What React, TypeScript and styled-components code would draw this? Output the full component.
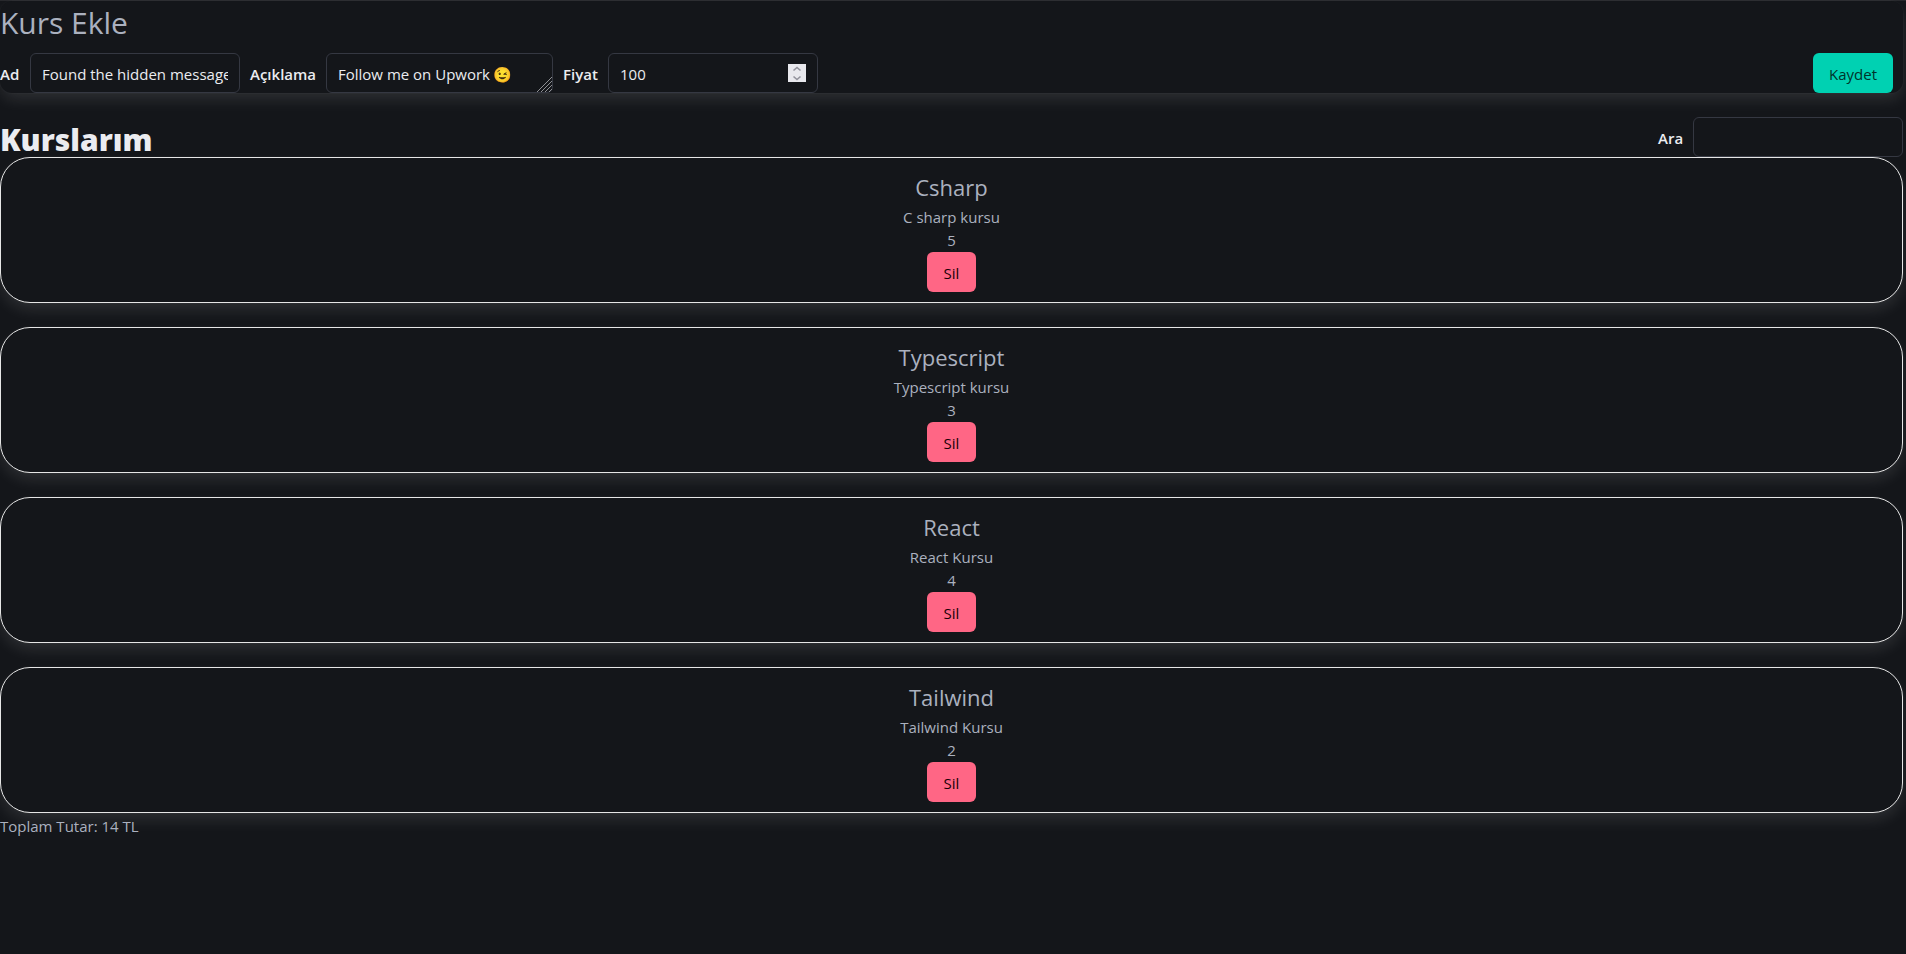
import React, { useState } from "react";
import styled, { createGlobalStyle } from "styled-components";

const GlobalStyle = createGlobalStyle`
  *, *::before, *::after { box-sizing: border-box; }
  html { background: #14161a; color-scheme: dark; }
  body {
    margin: 0;
    overflow-x: hidden;
    color: #abb1bf;
    font-family: "Segoe UI", "Open Sans", "Noto Sans", "Noto Color Emoji", sans-serif;
    font-size: 15px;
    line-height: 24px;
  }
  h1, h2, h3, p { margin: 0; font-weight: 400; }
  button, input, textarea { font: inherit; }
`;

const Page = styled.main`
  border-top: 1px solid #28292d;
  padding-right: 3px;
`;

const Panel = styled.section`
  background: #14161a;
  border-radius: 12px;
  box-shadow: 0 8px 16px -2px rgba(235, 236, 240, 0.12), 0 0 0 1px rgba(235, 236, 240, 0.02);
`;

const AddPanel = styled(Panel)`
  padding-top: 4px;
  margin-bottom: 24px;
`;

const PanelTitle = styled.h1`
  padding-bottom: 12px;
  font-size: 30px;
  line-height: 36px;
`;

const Form = styled.form`
  display: flex;
  gap: 10px;
  padding-right: 10px;
`;

const Field = styled.div`
  display: flex;
  align-items: center;
  gap: 10px;
`;

const Label = styled.label<{ $width: number }>`
  width: ${(p) => p.$width}px;
  padding-top: 2px;
  color: #ebecf0;
  font-weight: 600;
  white-space: nowrap;
`;

const Input = styled.input`
  display: block;
  width: 210px;
  height: 40px;
  padding: 8px 11px 6px;
  color: #ebecf0;
  background: #14161a;
  border: 1px solid #353842;
  border-radius: 6px;
  outline: none;
  appearance: none;

  &[type="number"] { appearance: textfield; }
  &::-webkit-inner-spin-button { appearance: none; margin: 0; }
`;

const TextArea = styled(Input)`
  width: 227px;
  resize: both;
  overflow: hidden;

  &::-webkit-resizer { background: transparent; }
`;

const ControlBox = styled.div`
  position: relative;
`;

const Grip = styled.svg`
  position: absolute;
  right: 1px;
  bottom: 1px;
  pointer-events: none;
`;

const Spinner = styled.span`
  position: absolute;
  top: 11px;
  right: 12px;
  display: flex;
  flex-direction: column;
  width: 18px;
  height: 18px;
  background: #e8e8ed;
`;

const SpinButton = styled.button`
  display: flex;
  align-items: center;
  justify-content: center;
  height: 9px;
  padding: 0;
  border: 0;
  background: none;
`;

const Button = styled.button<{ $tone: "primary" | "danger" }>`
  height: 40px;
  padding: 2px 15px 0;
  border: 0;
  border-radius: 6px;
  background: ${(p) => (p.$tone === "primary" ? "#00d1b2" : "#ff6685")};
  color: ${(p) => (p.$tone === "primary" ? "#00332b" : "#1a0005")};
  cursor: pointer;
`;

const SaveButton = styled(Button)`
  width: 80px;
  margin-left: auto;
`;

const DeleteButton = styled(Button)`
  width: 49px;
  padding: 2px 0 0;
`;

const ListHeader = styled.header`
  display: flex;
  justify-content: space-between;
  align-items: center;
`;

const ListTitle = styled.h2`
  && { font-weight: 800; }
  padding-top: 6px;
  color: #ebecf0;
  font-size: 30px;
  line-height: 34px;
`;

const CourseList = styled.div`
  display: flex;
  flex-direction: column;
  gap: 24px;
`;

const Card = styled(Panel).attrs({ as: "article" })`
  display: flex;
  flex-direction: column;
  align-items: center;
  padding: 11px 10px 10px;
  border: 1px solid #e6e6e6;
  border-radius: 30px;
`;

const CardTitle = styled.h3`
  font-size: 22px;
  line-height: 36px;
`;

const Price = styled.p`
  line-height: 23px;
`;

const Total = styled.p`
  padding-top: 1px;
`;

const initialCourses = [
  { id: 1, title: "Csharp", description: "C sharp kursu", price: 5 },
  { id: 2, title: "Typescript", description: "Typescript kursu", price: 3 },
  { id: 3, title: "React", description: "React Kursu", price: 4 },
  { id: 4, title: "Tailwind", description: "Tailwind Kursu", price: 2 },
];

function Chevron({ up }: { up?: boolean }) {
  return (
    <svg width="10" height="6" viewBox="0 0 10 6" fill="none" stroke="#92929c" strokeWidth="1.6">
      <path d={up ? "M1.5 4.5 5 1.5 8.5 4.5" : "M1.5 1.5 5 4.5 8.5 1.5"} />
    </svg>
  );
}

export default function App() {
  const [courses, setCourses] = useState(initialCourses);
  const [name, setName] = useState("Found the hidden message");
  const [description, setDescription] = useState("Follow me on Upwork 😉");
  const [price, setPrice] = useState(100);
  const [query, setQuery] = useState("");

  const visible = courses.filter((c) => c.title.toLowerCase().includes(query.toLowerCase()));
  const total = courses.reduce((sum, c) => sum + c.price, 0);

  const save = (e: React.FormEvent) => {
    e.preventDefault();
    setCourses([...courses, { id: Date.now(), title: name, description, price }]);
  };

  return (
    <>
      <GlobalStyle />
      <Page>
        <AddPanel>
          <PanelTitle>Kurs Ekle</PanelTitle>
          <Form onSubmit={save}>
            <Field>
              <Label $width={20} htmlFor="name">Ad</Label>
              <Input id="name" value={name} onChange={(e) => setName(e.target.value)} />
            </Field>
            <Field>
              <Label $width={66} htmlFor="description">Açıklama</Label>
              <ControlBox>
                <TextArea
                  as="textarea"
                  id="description"
                  rows={1}
                  value={description}
                  onChange={(e: any) => setDescription(e.target.value)}
                />
                <Grip width="15" height="15" viewBox="0 0 15 15" fill="none" stroke="#8f9094" strokeWidth="1">
                  <path d="M0 15 15 0M4 15 15 4M8 15 15 8M12 15 15 12" />
                </Grip>
              </ControlBox>
            </Field>
            <Field>
              <Label $width={35} htmlFor="price">Fiyat</Label>
              <ControlBox>
                <Input id="price" type="number" value={price} onChange={(e) => setPrice(Number(e.target.value))} />
                <Spinner>
                  <SpinButton type="button" aria-label="Artır" onClick={() => setPrice(price + 1)}>
                    <Chevron up />
                  </SpinButton>
                  <SpinButton type="button" aria-label="Azalt" onClick={() => setPrice(price - 1)}>
                    <Chevron />
                  </SpinButton>
                </Spinner>
              </ControlBox>
            </Field>
            <SaveButton $tone="primary" type="submit">Kaydet</SaveButton>
          </Form>
        </AddPanel>

        <ListHeader>
          <ListTitle>Kurslarım</ListTitle>
          <Field>
            <Label $width={25} htmlFor="search">Ara</Label>
            <Input id="search" value={query} onChange={(e) => setQuery(e.target.value)} />
          </Field>
        </ListHeader>

        <CourseList>
          {visible.map((course) => (
            <Card key={course.id}>
              <CardTitle>{course.title}</CardTitle>
              <p>{course.description}</p>
              <Price>{course.price}</Price>
              <DeleteButton
                $tone="danger"
                type="button"
                onClick={() => setCourses(courses.filter((c) => c.id !== course.id))}
              >
                Sil
              </DeleteButton>
            </Card>
          ))}
        </CourseList>
        <Total>Toplam Tutar: {total} TL</Total>
      </Page>
    </>
  );
}
